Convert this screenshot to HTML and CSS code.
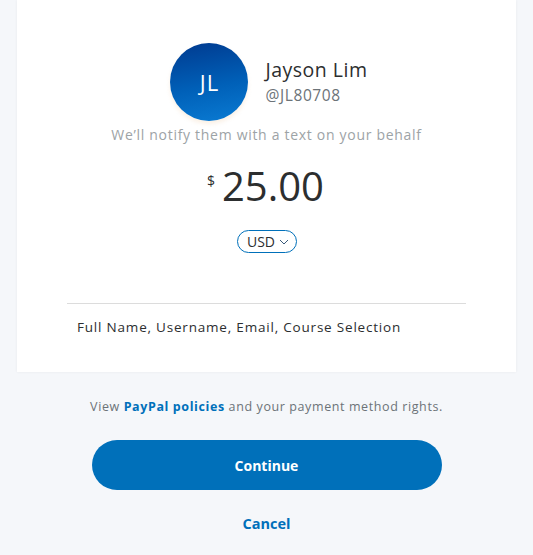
FILE: index.html
```html
<!DOCTYPE html>
<html>
<head>
<meta charset="utf-8">
<link rel="stylesheet" href="styles.css">
</head>
<body>
<div class="page">
  <section class="card">
    <div class="recipient">
      <div class="avatar">JL</div>
      <div class="who">
        <div class="name">Jayson Lim</div>
        <div class="handle">@JL80708</div>
      </div>
    </div>
    <p class="notify">We’ll notify them with a text on your behalf</p>
    <div class="amount"><span class="cur">$</span><span class="value">25.00</span></div>
    <div class="currency-row">
      <button class="currency">USD <svg width="10" height="6" viewBox="0 0 10 6"><path d="M1 1l4 4 4-4" fill="none" stroke="#3a5a7a" stroke-width="1"/></svg></button>
    </div>
    <div class="note">Full Name, Username, Email, Course Selection</div>
  </section>
  <p class="policies">View <a>PayPal policies</a> and your payment method rights.</p>
  <button class="continue">Continue</button>
  <div class="cancel-row"><a class="cancel">Cancel</a></div>
</div>
</body>
</html>
```
FILE: styles.css
```css
html, body {
  margin: 0;
  padding: 0;
  background: #f5f7fa;
  font-family: "Open Sans", "DejaVu Sans", sans-serif;
}
.page {
  width: 533px;
  height: 555px;
  overflow: hidden;
}
.card {
  margin: 0 17px;
  background: #fff;
  box-shadow: 0 0 3px rgba(0,0,0,0.06);
  padding: 43px 50px 0;
  box-sizing: border-box;
  height: 372px;
}
.recipient {
  display: flex;
  justify-content: center;
  align-items: center;
  gap: 17px;
  padding-left: 5px;
}
.avatar {
  width: 78px;
  height: 78px;
  border-radius: 50%;
  background: linear-gradient(170deg, #003a8f 0%, #0060b8 55%, #0a7bd3 100%);
  color: #fff;
  display: flex;
  align-items: center;
  justify-content: center;
  font-size: 22px;
  letter-spacing: 1px;
  box-shadow: 0 3px 4px rgba(230,170,110,0.18);
}
.who {
  margin-top: 2px;
}
.name {
  font-size: 19.5px;
  color: #2c2e2f;
  line-height: 24px;
  letter-spacing: 0.5px;
}
.handle {
  font-size: 15.5px;
  color: #6c7378;
  line-height: 26px;
  letter-spacing: 0.6px;
}
.notify {
  margin: 4px 0 0;
  text-align: center;
  font-size: 14px;
  color: #9da3a6;
  line-height: 20px;
  letter-spacing: 0.7px;
}
.amount {
  display: flex;
  justify-content: center;
  align-items: flex-start;
  margin-top: 17px;
  color: #2c2e2f;
  padding-right: 2px;
}
.cur {
  font-size: 14px;
  margin-top: 9px;
  margin-right: 7px;
}
.value {
  font-size: 40px;
  line-height: 48px;
}
.currency-row {
  display: flex;
  justify-content: center;
  margin-top: 20px;
}
.currency {
  font-family: inherit;
  background: #fff;
  border: 1px solid #0070ba;
  border-radius: 12px;
  height: 23px;
  padding: 0 7px 0 9px;
  font-size: 14px;
  color: #2c2e2f;
  display: flex;
  align-items: center;
  gap: 4px;
  margin-left: 1px;
}
.note {
  margin-top: 50px;
  border-top: 1px solid #dcdcdc;
  padding: 13px 10px 0;
  font-size: 13.5px;
  color: #2c2e2f;
  line-height: 20px;
  letter-spacing: 0.8px;
}
.policies {
  margin: 25px 0 0;
  text-align: center;
  font-size: 12.5px;
  color: #6c7378;
  line-height: 20px;
  letter-spacing: 0.6px;
}
.policies a {
  color: #0070ba;
  font-weight: 700;
}
.continue {
  display: block;
  margin: 23px auto 0;
  width: 350px;
  height: 50px;
  border: none;
  border-radius: 25px;
  background: #0070ba;
  color: #fff;
  font-family: inherit;
  font-weight: 700;
  font-size: 14px;
}
.cancel-row {
  text-align: center;
  margin-top: 22px;
}
.cancel {
  color: #0070ba;
  font-weight: 700;
  font-size: 14.5px;
}
```
